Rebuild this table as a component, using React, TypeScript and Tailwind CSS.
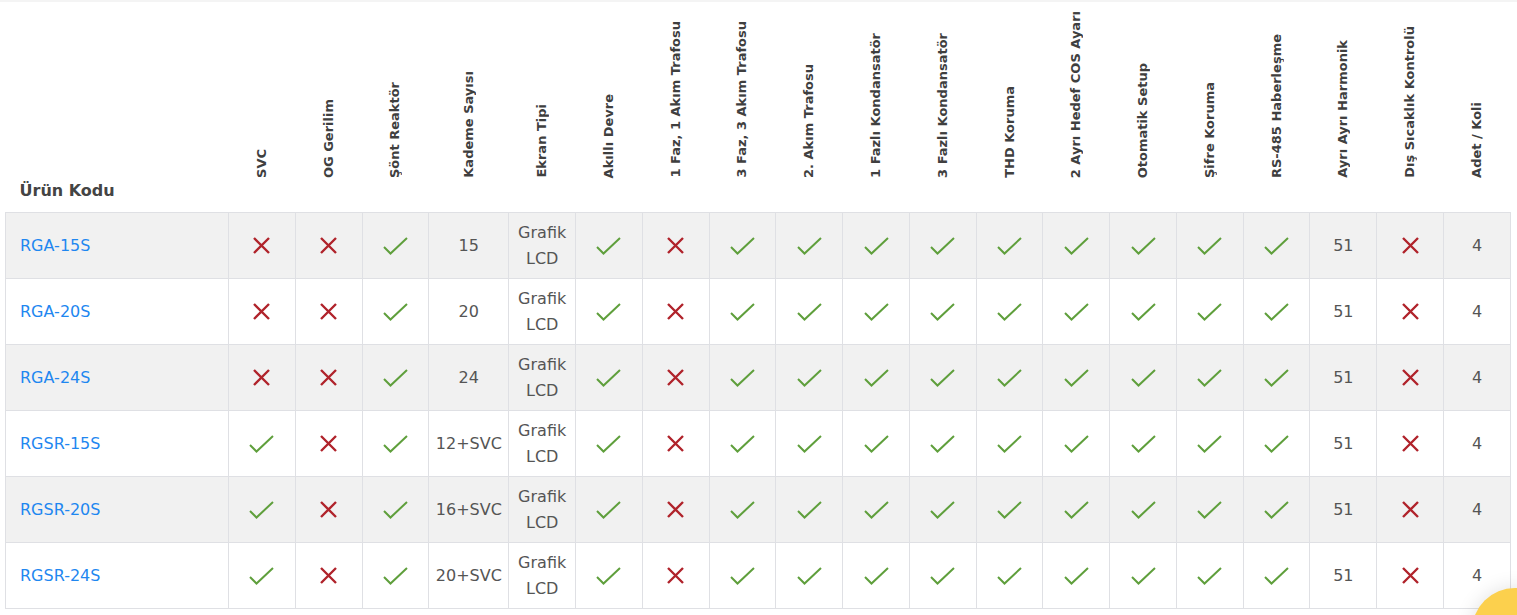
import React from "react";

const headers = [
  "SVC",
  "OG Gerilim",
  "Şönt Reaktör",
  "Kademe Sayısı",
  "Ekran Tipi",
  "Akıllı Devre",
  "1 Faz, 1 Akım Trafosu",
  "3 Faz, 3 Akım Trafosu",
  "2. Akım Trafosu",
  "1 Fazlı Kondansatör",
  "3 Fazlı Kondansatör",
  "THD Koruma",
  "2 Ayrı Hedef COS Ayarı",
  "Otomatik Setup",
  "Şifre Koruma",
  "RS-485 Haberleşme",
  "Ayrı Ayrı Harmonik",
  "Dış Sıcaklık Kontrolü",
  "Adet / Koli",
];

type Cell = boolean | string;

const tail: Cell[] = [
  "Grafik LCD",
  true,
  false,
  true,
  true,
  true,
  true,
  true,
  true,
  true,
  true,
  true,
  "51",
  false,
  "4",
];

const rows: { code: string; cells: Cell[] }[] = [
  { code: "RGA-15S", cells: [false, false, true, "15", ...tail] },
  { code: "RGA-20S", cells: [false, false, true, "20", ...tail] },
  { code: "RGA-24S", cells: [false, false, true, "24", ...tail] },
  { code: "RGSR-15S", cells: [true, false, true, "12+SVC", ...tail] },
  { code: "RGSR-20S", cells: [true, false, true, "16+SVC", ...tail] },
  { code: "RGSR-24S", cells: [true, false, true, "20+SVC", ...tail] },
];

function Check() {
  return (
    <svg width="25" height="18" viewBox="0 0 25 18" className="inline-block">
      <path
        d="M1 10 L7.5 16.5 L24 1"
        fill="none"
        stroke="#5f9f3c"
        strokeWidth="2"
        strokeLinecap="butt"
        strokeLinejoin="miter"
      />
    </svg>
  );
}

function Cross() {
  return (
    <svg width="17" height="17" viewBox="0 0 17 17" className="inline-block">
      <path
        d="M1 1 L16 16 M16 1 L1 16"
        fill="none"
        stroke="#b0232b"
        strokeWidth="2.4"
      />
    </svg>
  );
}

export default function App() {
  return (
    <div
      className="relative w-[1517px] h-[615px] overflow-hidden bg-white"
      style={{ fontFamily: '"DejaVu Sans", "Liberation Sans", sans-serif' }}
    >
      <div className="h-[2px] bg-[#f4f4f4]" />
      <div className="pl-[5px]">
        <table className="table-fixed border-collapse w-[1506px]">
          <colgroup>
            <col className="w-[223px]" />
            {headers.map((h, i) => (
              <col key={i} className={i === 3 ? "w-[80px]" : ""} />
            ))}
          </colgroup>
          <thead>
            <tr className="h-[210px]">
              <th className="align-bottom text-left pl-[14px] pb-[9px] text-[16px] font-bold text-[#444] leading-[24px]">
                Ürün Kodu
              </th>
              {headers.map((h, i) => (
                <th key={i} className="align-bottom p-0">
                  <div className="h-[176px] flex flex-col justify-end items-center">
                    <span className="[writing-mode:vertical-rl] rotate-180 whitespace-nowrap text-[13px] font-bold text-[#3f3f3f] leading-[16px]">
                      {h}
                    </span>
                  </div>
                  <div className="h-[34px]" />
                </th>
              ))}
            </tr>
          </thead>
          <tbody>
            {rows.map((r, ri) => (
              <tr
                key={r.code}
                className={`h-[66px] ${ri % 2 === 0 ? "bg-[#f1f1f1]" : "bg-white"}`}
              >
                <td className="border border-[#dfe0e4] pl-[14px] text-[16px] text-[#1f87f0] align-middle">
                  {r.code}
                </td>
                {r.cells.map((c, ci) => (
                  <td
                    key={ci}
                    className="border border-[#dfe0e4] text-center align-middle text-[16px] leading-[26px] text-[#555] p-0"
                  >
                    {c === true ? (
                      <div className="flex justify-center items-center">
                        <Check />
                      </div>
                    ) : c === false ? (
                      <div className="flex justify-center items-center">
                        <Cross />
                      </div>
                    ) : (
                      <span>{c}</span>
                    )}
                  </td>
                ))}
              </tr>
            ))}
          </tbody>
        </table>
      </div>
      <div className="absolute left-[1472px] top-[588px] w-[86px] h-[86px] rounded-full bg-[#fcd04d] shadow-[0_0_20px_rgba(0,0,0,0.12)]" />
    </div>
  );
}
